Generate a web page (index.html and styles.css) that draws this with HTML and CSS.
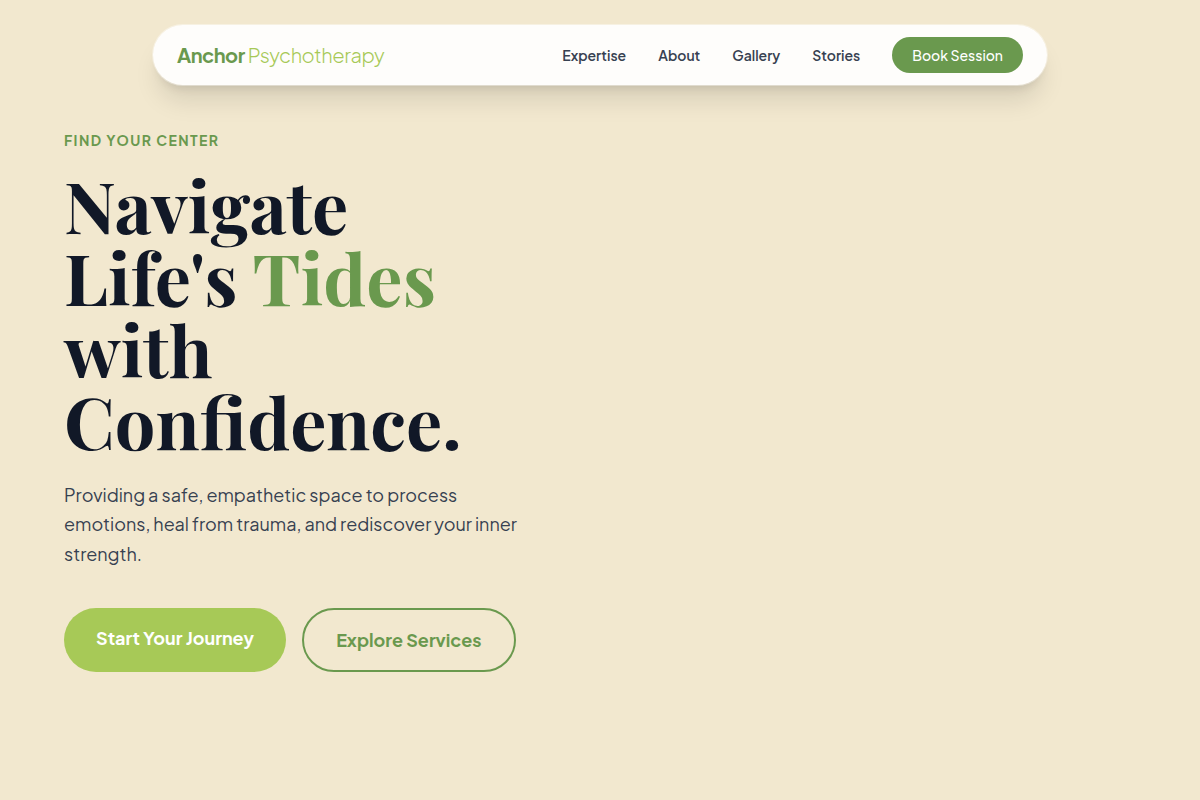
FILE: index.html
```html
<!DOCTYPE html>
<html lang="en">
<head>
  <meta charset="UTF-8">
  <meta name="viewport" content="width=device-width, initial-scale=1.0">
  <title>Anchor Psychotherapy</title>
  <link rel="stylesheet" href="styles.css">
</head>
<body>
  <header class="site-header">
    <nav class="navbar">
      <a href="#" class="logo">Anchor <span>Psychotherapy</span></a>
      <div class="nav-links">
        <a href="#expertise">Expertise</a>
        <a href="#about">About</a>
        <a href="#gallery">Gallery</a>
        <a href="#stories">Stories</a>
        <a href="#book" class="nav-cta">Book Session</a>
      </div>
    </nav>
  </header>

  <main class="hero">
    <div class="hero-content">
      <p class="eyebrow">Find Your Center</p>
      <h1>Navigate<br>Life's <span class="accent">Tides</span><br>with<br>Confidence.</h1>
      <p class="hero-text">Providing a safe, empathetic space to process emotions, heal from trauma, and rediscover your inner strength.</p>
      <div class="hero-actions">
        <a href="#book" class="btn btn-primary">Start Your Journey</a>
        <a href="#expertise" class="btn btn-outline">Explore Services</a>
      </div>
    </div>
  </main>
</body>
</html>
```

FILE: styles.css
```css
:root {
  --green: #6a994e;
  --lime: #a7c957;
  --sand: #f2e8cf;
  --ink: #111827;
  --slate: #374151;
}

* {
  margin: 0;
  padding: 0;
  box-sizing: border-box;
}

body {
  min-height: 100vh;
  background: var(--sand);
  color: var(--slate);
  font-family: "Plus Jakarta Sans", Inter, sans-serif;
}

a {
  text-decoration: none;
}

/* Navigation */
.site-header {
  padding: 24px 24px 0;
}

.navbar {
  display: flex;
  justify-content: space-between;
  align-items: center;
  max-width: 896px;
  margin: 0 auto;
  padding: 12px 24px;
  background: #fefdfb;
  background-clip: padding-box;
  border: 1px solid rgba(255, 255, 255, 0.4);
  border-radius: 32px;
  box-shadow: 0 20px 25px -5px rgba(0, 0, 0, 0.1), 0 8px 10px -6px rgba(0, 0, 0, 0.1);
}

.logo {
  color: var(--green);
  font-size: 20px;
  font-weight: 700;
  line-height: 28px;
  letter-spacing: -0.5px;
}

.logo span {
  color: var(--lime);
  font-weight: 300;
}

.nav-links {
  display: flex;
  align-items: center;
  gap: 32px;
  font-size: 14px;
  font-weight: 600;
  line-height: 20px;
}

.nav-links a {
  color: var(--slate);
}

.nav-links .nav-cta {
  padding: 8px 20px;
  background: var(--green);
  border-radius: 18px;
  color: #fff;
  font-weight: 500;
}

/* Hero */
.hero {
  display: grid;
  grid-template-columns: repeat(auto-fit, minmax(min(100%, 460px), 1fr));
  gap: 64px;
  padding: 44px 64px;
}

.eyebrow {
  margin-bottom: 18px;
  color: var(--green);
  font-size: 14px;
  font-weight: 700;
  line-height: 20px;
  letter-spacing: 0.1em;
  text-transform: uppercase;
}

h1 {
  margin-bottom: 24px;
  color: var(--ink);
  font-family: "Playfair Display", "Liberation Serif", serif;
  font-size: 72px;
  font-weight: 700;
  line-height: 72px;
}

.accent {
  color: var(--green);
}

.hero-text {
  max-width: 472px;
  margin-bottom: 40px;
  font-size: 18px;
  line-height: 1.625;
}

.hero-actions {
  display: flex;
  flex-wrap: wrap;
  gap: 16px;
}

.btn {
  padding: 16px 32px;
  border-radius: 32px;
  font-size: 18px;
  font-weight: 700;
  line-height: 28px;
}

.btn-primary {
  background: var(--lime);
  color: #fff;
}

.btn-outline {
  border: 2px solid var(--green);
  color: var(--green);
}
```
